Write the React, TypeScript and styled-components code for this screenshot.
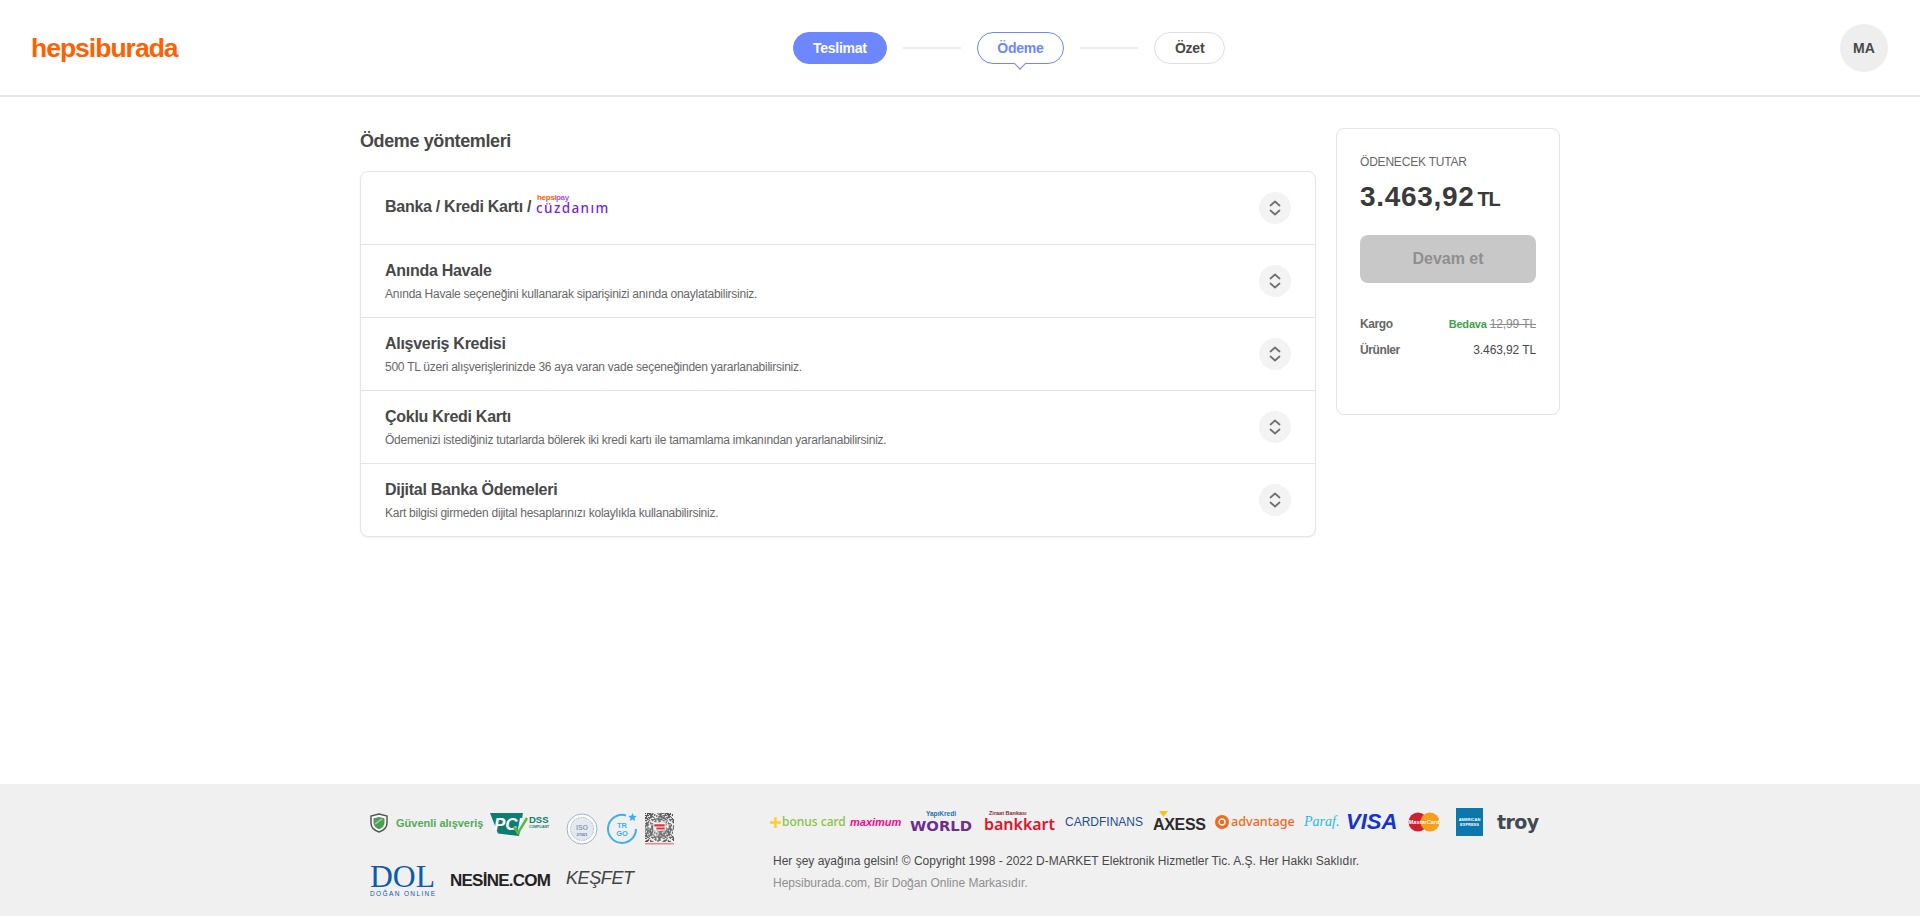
import React from 'react'
import styled, { createGlobalStyle } from 'styled-components'

const GlobalStyle = createGlobalStyle`
  html, body {
    margin: 0;
    padding: 0;
    background: #fff;
    font-family: "Liberation Sans", Arial, sans-serif;
    color: #484848;
  }
  * { box-sizing: border-box; }
`

const Page = styled.div`
  width: 1920px;
  height: 916px;
  display: flex;
  flex-direction: column;
  overflow: hidden;
`

const Header = styled.header`
  height: 97px;
  flex: none;
  display: grid;
  grid-template-columns: 762px auto 1fr;
  align-items: center;
  padding: 0 32px 0 31px;
  border-bottom: 2px solid #e5e5e5;
`

const Logo = styled.div`
  font-size: 26.5px;
  font-weight: 700;
  letter-spacing: -1px;
  line-height: 30px;
  color: #ff6000;
`

const Steps = styled.nav`
  display: flex;
  align-items: center;
  gap: 16px;
`

const Step = styled.div<{ $state: 'done' | 'active' | 'next' }>`
  position: relative;
  height: 32px;
  padding: 0 ${(p) => (p.$state === 'done' ? 19 : p.$state === 'active' ? 19.5 : 20)}px;
  display: flex;
  align-items: center;
  border-radius: 16px;
  font-size: 14px;
  font-weight: 700;
  letter-spacing: -0.25px;
  border: 1px solid
    ${(p) => (p.$state === 'next' ? '#dedede' : '#6c87ff')};
  background: ${(p) => (p.$state === 'done' ? '#6c87ff' : '#fff')};
  color: ${(p) =>
    p.$state === 'done' ? '#fff' : p.$state === 'active' ? '#6c87ff' : '#484848'};
`

const StepTail = styled.span`
  position: absolute;
  left: 50%;
  bottom: -5px;
  width: 8px;
  height: 8px;
  margin-left: -4px;
  background: #fff;
  border-right: 1px solid #6c87ff;
  border-bottom: 1px solid #6c87ff;
  transform: rotate(45deg);
`

const StepLine = styled.span`
  width: 58px;
  height: 2px;
  background: #eeeeee;
`

const Avatar = styled.div`
  justify-self: end;
  width: 48px;
  height: 48px;
  border-radius: 50%;
  background: #eeeeee;
  display: flex;
  align-items: center;
  justify-content: center;
  font-size: 14px;
  font-weight: 700;
  color: #484848;
`

const Main = styled.main`
  flex: 1;
  width: 1200px;
  margin: 0 auto;
  display: flex;
  gap: 20px;
  align-items: flex-start;
`

const Methods = styled.section`
  width: 956px;
`

const Title = styled.h2`
  margin: 33px 0 0;
  height: 41px;
  font-size: 18px;
  line-height: 22px;
  font-weight: 700;
  letter-spacing: -0.38px;
  color: #484848;
`

const Card = styled.div`
  border: 1px solid #e5e5e5;
  border-radius: 8px;
  box-shadow: 0 1px 2px rgba(0, 0, 0, 0.06);
  background: #fff;
`

const Row = styled.div`
  height: 73px;
  padding: 0 24px 0 24px;
  display: flex;
  align-items: center;
  justify-content: space-between;
  border-bottom: 1px solid #e5e5e5;
  &:last-child {
    height: 72px;
    border-bottom: none;
  }
`

const RowText = styled.div`
  display: flex;
  flex-direction: column;
  gap: 7px;
`

const RowTitle = styled.div`
  font-size: 16px;
  line-height: 18px;
  font-weight: 700;
  letter-spacing: -0.28px;
  color: #484848;
  display: flex;
  align-items: center;
`

const LeadTitle = styled(RowTitle)`
  margin-top: -2px;
`

const RowSub = styled.div`
  font-size: 12px;
  line-height: 14px;
  letter-spacing: -0.25px;
  color: #686868;
`

const Toggle = styled.div`
  width: 32px;
  height: 32px;
  border-radius: 50%;
  background: #f3f3f3;
  display: flex;
  align-items: center;
  justify-content: center;
`

const Summary = styled.aside`
  width: 224px;
  height: 287px;
  margin-top: 31px;
  padding: 26px 23px 0;
  border: 1px solid #e5e5e5;
  border-radius: 8px;
`

const SumLabel = styled.div`
  font-size: 12px;
  line-height: 14px;
  letter-spacing: -0.2px;
  color: #686868;
`

const Total = styled.div`
  margin-top: 12px;
  font-size: 28px;
  line-height: 32px;
  font-weight: 700;
  color: #3a3a3a;
  letter-spacing: 0.7px;
  small {
    font-size: 20px;
    letter-spacing: -1.2px;
    margin-left: 3px;
  }
`

const Continue = styled.button`
  display: block;
  width: 176px;
  height: 48px;
  margin-top: 20px;
  border: none;
  border-radius: 8px;
  background: #c8c8c8;
  color: #8f8f8f;
  font: 700 16px "Liberation Sans", Arial, sans-serif;
`

const SumRows = styled.div`
  margin-top: 34px;
  display: flex;
  flex-direction: column;
  gap: 12px;
`

const SumRow = styled.div`
  display: flex;
  justify-content: space-between;
  font-size: 12px;
  line-height: 14px;
  letter-spacing: -0.1px;
  color: #484848;
`

const SumKey = styled.span`
  color: #666;
  font-weight: 700;
  letter-spacing: -0.4px;
`

const Free = styled.span`
  color: #43a04a;
  font-weight: 700;
  font-size: 11px;
  letter-spacing: -0.2px;
  margin-right: 3px;
`

const Struck = styled.s`
  color: #8a8a8a;
`

const Footer = styled.footer`
  flex: none;
  height: 132px;
  background: #f0f0f0;
`

const FooterInner = styled.div`
  width: 1200px;
  height: 100%;
  margin: 0 auto;
  display: flex;
`

const FooterLeft = styled.div`
  width: 410px;
  padding: 29px 0 0 10px;
  display: flex;
  flex-direction: column;
  gap: 18px;
`

const FooterRight = styled.div`
  flex: 1;
  padding-top: 23px;
`

const BadgeRow = styled.div`
  display: flex;
  align-items: flex-start;
  height: 33px;
`

const LogoRow = styled.div`
  display: flex;
  align-items: center;
  height: 33px;
`

const BrandRow = styled.div`
  display: flex;
  align-items: center;
  height: 30px;
`

const Secure = styled.span`
  font-size: 11px;
  font-weight: 700;
  color: #55a85c;
  margin: 3px 9px 0 8px;
  line-height: 14px;
  width: 85px;
  white-space: nowrap;
`

const Drawn = styled.svg<{ $gap?: number; $top?: number }>`
  flex: none;
  display: block;
  overflow: visible;
  margin-right: ${(p) => p.$gap ?? 0}px;
  margin-top: ${(p) => p.$top ?? 0}px;
`

const Brand = styled.span<{ $w: number; $c: string; $size: number; $weight?: number; $font?: string; $spacing?: number; $italic?: boolean; $top?: number }>`
  flex: none;
  width: ${(p) => p.$w}px;
  color: ${(p) => p.$c};
  font-size: ${(p) => p.$size}px;
  font-weight: ${(p) => p.$weight ?? 400};
  font-family: ${(p) => p.$font ?? '"Liberation Sans", Arial, sans-serif'};
  letter-spacing: ${(p) => p.$spacing ?? 0}px;
  font-style: ${(p) => (p.$italic ? 'italic' : 'normal')};
  white-space: nowrap;
  line-height: 18px;
  margin-top: ${(p) => p.$top ?? 0}px;
`

const Legal = styled.p<{ $muted?: boolean }>`
  margin: ${(p) => (p.$muted ? '8px 0 0' : '17px 0 0')};
  padding-left: 3px;
  font-size: 12px;
  line-height: 14px;
  color: ${(p) => (p.$muted ? '#8f8f8f' : '#484848')};
`

const Chevrons = () => (
  <svg width="14" height="18" viewBox="0 0 14 18" fill="none" stroke="#707070" strokeWidth="1.7" strokeLinecap="round" strokeLinejoin="round">
    <path d="M2.5 6.5 7 2.5l4.5 4M2.5 11.5 7 15.5l4.5-4" />
  </svg>
)

const WalletLogo = () => (
  <Drawn width="73" height="28" viewBox="0 0 73 28">
    <text x="2" y="7" fontFamily="Liberation Sans" fontSize="8" fill="#ff6000" fontWeight="700">hepsi</text>
    <text x="21" y="7" fontFamily="Liberation Sans" fontSize="8" fill="#a855f7">pay</text>
    <text x="1" y="20" fontFamily="Noto Sans" fontSize="13.500" fontWeight="500" fill="#7a1fe0" textLength="72">cüzdanım</text>
  </Drawn>
)

const Shield = () => (
  <Drawn width="18" height="20" viewBox="0 0 18 20">
    <path d="M9 1 17 3v7c0 4.500-3.500 7.500-8 9-4.500-1.500-8-4.500-8-9V3z" fill="#fff" stroke="#555" strokeWidth="1.5" />
    <path d="M9 4 14.500 5.300v4.700c0 3-2.400 5-5.500 6.200C5.900 15 3.500 13 3.500 10V5.300z" fill="#4f9d55" />
    <path d="M5 11l7-5" stroke="#8fce94" strokeWidth="1.600" />
  </Drawn>
)

const Pci = () => (
  <Drawn width="60" height="24" viewBox="0 0 60 24" $gap={16}>
    <path d="M0 0h33l-4 23-21-2.500z" fill="#0f7c71" />
    <text x="4" y="17" fontFamily="Liberation Sans" fontWeight="700" fontStyle="italic" fontSize="17" fill="#fff">PCI</text>
    <path d="M24 14l4 6 9-15" fill="none" stroke="#5fb83c" strokeWidth="2.500" />
    <text x="39" y="10" fontFamily="Liberation Sans" fontWeight="700" fontSize="9.500" fill="#0f7c71">DSS</text>
    <text x="39" y="14.500" fontFamily="Liberation Sans" fontWeight="700" fontSize="3.400" fill="#0f7c71">COMPLIANT</text>
  </Drawn>
)

const Iso = () => (
  <Drawn width="32" height="32" viewBox="0 0 32 32" $gap={8}>
    <circle cx="16" cy="16" r="15" fill="#fff" stroke="#9db3c8" strokeWidth="1" />
    <circle cx="16" cy="16" r="11.500" fill="#e3e9ef" stroke="#a7b8c9" strokeWidth="1" strokeDasharray="1.500 1" />
    <text x="16" y="17" textAnchor="middle" fontFamily="Liberation Sans" fontWeight="700" fontSize="7" fill="#8ea3b8">ISO</text>
    <text x="16" y="23" textAnchor="middle" fontFamily="Liberation Sans" fontWeight="700" fontSize="4" fill="#5f7d9b">27001</text>
  </Drawn>
)

const TrGo = () => (
  <Drawn width="32" height="32" viewBox="0 0 32 32" $gap={7}>
    <path d="M20 2.500A14 14 0 1 0 30 16" fill="none" stroke="#3db0ea" strokeWidth="2" />
    <path d="M26.500 0l1.300 2.800 3 .3-2.300 2 .7 3-2.700-1.600-2.700 1.600.7-3-2.300-2 3-.3z" fill="#3db0ea" />
    <text x="16" y="15" textAnchor="middle" fontFamily="Liberation Sans" fontWeight="700" fontSize="7.500" fill="#3db0ea">TR</text>
    <text x="16" y="22.500" textAnchor="middle" fontFamily="Liberation Sans" fontWeight="700" fontSize="7.500" fill="#3db0ea">GO</text>
  </Drawn>
)

// qr cells are only texture at this size, so a fixed pseudo random pattern is enough
const qrCells: [number, number][] = []
for (let y = 0; y < 28; y++) {
  for (let x = 0; x < 28; x++) {
    if ((x * x * 7 + y * y * 13 + x * y * 5 + x * 3) % 17 < 9) qrCells.push([x, y])
  }
}

const Qr = () => (
  <Drawn width="29" height="32" viewBox="0 0 28 31">
    {qrCells.map(([x, y]) => (
      <rect key={`${x}-${y}`} x={x} y={y} width="1" height="1" fill="#3a3a3a" />
    ))}
    <rect x="8" y="9" width="12" height="8" fill="#f0f0f0" />
    <path d="M9 11h10v2H9zM11 14h8v2h-8z" fill="#d8383f" />
    <rect x="0" y="29" width="28" height="1.500" fill="#e58a8c" />
  </Drawn>
)

const DolLogo = () => (
  <Drawn width="66" height="33" viewBox="0 0 66 33" $gap={14}>
    <text x="0" y="23" fontFamily="Liberation Serif" fontSize="32" fill="#0d5cab" textLength="65" lengthAdjust="spacingAndGlyphs">DOL</text>
    <text x="0" y="32" fontFamily="Liberation Sans" fontSize="6.500" fill="#0d5cab" textLength="65">DOĞAN ONLINE</text>
  </Drawn>
)

const Plus = () => (
  <Drawn width="11" height="11" viewBox="0 0 11 11" $gap={1}>
    <path d="M4.300 0h2.400v4.300H11v2.400H6.700V11H4.300V6.700H0V4.300h4.300z" fill="#ffcf26" />
  </Drawn>
)

const WorldLogo = () => (
  <Drawn width="62" height="24" viewBox="0 0 62 24" $gap={12}>
    <text x="16" y="6" fontFamily="Liberation Sans" fontWeight="700" fontSize="6.500" fill="#1d6fb8">YapıKredi</text>
    <text x="0" y="21" fontFamily="DejaVu Sans" fontWeight="700" fontSize="14" fill="#6f2c91" textLength="62" lengthAdjust="spacingAndGlyphs">WORLD</text>
  </Drawn>
)

const BankkartLogo = () => (
  <Drawn width="72" height="26" viewBox="0 0 72 26" $gap={9}>
    <text x="5" y="6" fontFamily="Liberation Sans" fontWeight="700" fontSize="5.500" fill="#8a2b30">Ziraat Bankası</text>
    <text x="0" y="21" fontFamily="Noto Sans" fontWeight="600" fontSize="16" fill="#e2142d" textLength="71">bankkart</text>
  </Drawn>
)

const AxessLogo = () => (
  <Drawn width="54" height="22" viewBox="0 0 54 22" $gap={8} $top={-2}>
    <path d="M6 1h9l-4.500 6z" fill="#f8c21c" />
    <text x="0" y="20" fontFamily="Liberation Sans" fontWeight="700" fontSize="16" fill="#2b2b2b" textLength="53">AXESS</text>
  </Drawn>
)

const AdvantageMark = () => (
  <Drawn width="14" height="14" viewBox="0 0 14 14" $gap={2}>
    <circle cx="7" cy="7" r="7" fill="#f26a21" />
    <circle cx="7" cy="7" r="3" fill="none" stroke="#fff" strokeWidth="1.300" />
  </Drawn>
)

const MasterCard = () => (
  <Drawn width="32" height="20" viewBox="0 0 32 20" $gap={16}>
    <circle cx="10" cy="10" r="9.500" fill="#cf2030" />
    <circle cx="22" cy="10" r="9.500" fill="#f79e1b" />
    <text x="16" y="12" textAnchor="middle" fontFamily="Liberation Sans" fontWeight="700" fontStyle="italic" fontSize="5.600" fill="#fff">MasterCard</text>
  </Drawn>
)

const Amex = () => (
  <Drawn width="27" height="28" viewBox="0 0 27 28" $gap={14}>
    <rect width="27" height="28" fill="#0b77ad" />
    <text x="13.500" y="13" textAnchor="middle" fontFamily="Liberation Sans" fontWeight="700" fontSize="4" fill="#fff">AMERICAN</text>
    <text x="13.500" y="18" textAnchor="middle" fontFamily="Liberation Sans" fontWeight="700" fontSize="4" fill="#fff">EXPRESS</text>
  </Drawn>
)

const methods = [
  { title: 'Anında Havale', sub: 'Anında Havale seçeneğini kullanarak siparişinizi anında onaylatabilirsiniz.' },
  { title: 'Alışveriş Kredisi', sub: '500 TL üzeri alışverişlerinizde 36 aya varan vade seçeneğinden yararlanabilirsiniz.' },
  { title: 'Çoklu Kredi Kartı', sub: 'Ödemenizi istediğiniz tutarlarda bölerek iki kredi kartı ile tamamlama imkanından yararlanabilirsiniz.' },
  { title: 'Dijital Banka Ödemeleri', sub: 'Kart bilgisi girmeden dijital hesaplarınızı kolaylıkla kullanabilirsiniz.' },
]

const App = () => (
  <Page>
    <GlobalStyle />
    <Header>
      <Logo>hepsiburada</Logo>
      <Steps>
        <Step $state="done">Teslimat</Step>
        <StepLine />
        <Step $state="active">
          Ödeme
          <StepTail />
        </Step>
        <StepLine />
        <Step $state="next">Özet</Step>
      </Steps>
      <Avatar>MA</Avatar>
    </Header>

    <Main>
      <Methods>
        <Title>Ödeme yöntemleri</Title>
        <Card>
          <Row>
            <LeadTitle>
              Banka / Kredi Kartı /&nbsp;
              <WalletLogo />
            </LeadTitle>
            <Toggle><Chevrons /></Toggle>
          </Row>
          {methods.map((m) => (
            <Row key={m.title}>
              <RowText>
                <RowTitle>{m.title}</RowTitle>
                <RowSub>{m.sub}</RowSub>
              </RowText>
              <Toggle><Chevrons /></Toggle>
            </Row>
          ))}
        </Card>
      </Methods>

      <Summary>
        <SumLabel>ÖDENECEK TUTAR</SumLabel>
        <Total>3.463,92<small>TL</small></Total>
        <Continue>Devam et</Continue>
        <SumRows>
          <SumRow>
            <SumKey>Kargo</SumKey>
            <span><Free>Bedava</Free><Struck>12,99 TL</Struck></span>
          </SumRow>
          <SumRow>
            <SumKey>Ürünler</SumKey>
            <span>3.463,92 TL</span>
          </SumRow>
        </SumRows>
      </Summary>
    </Main>

    <Footer>
      <FooterInner>
        <FooterLeft>
          <BadgeRow>
            <Shield />
            <Secure>Güvenli alışveriş</Secure>
            <Pci />
            <Iso />
            <TrGo />
            <Qr />
          </BadgeRow>
          <LogoRow>
            <DolLogo />
            <Brand $w={116} $c="#232323" $size={17} $weight={700} $spacing={-0.75}>NESİNE.COM</Brand>
            <Brand $w={70} $c="#444" $size={18} $italic $spacing={-0.4} $top={-6}>KEŞFET</Brand>
          </LogoRow>
        </FooterLeft>
        <FooterRight>
          <BrandRow>
            <Plus />
            <Brand $w={68} $c="#86c440" $size={12} $font='"Noto Sans", sans-serif' $weight={500}>bonus card</Brand>
            <Brand $w={60} $c="#ec0d8c" $size={11} $weight={700} $italic>maximum</Brand>
            <WorldLogo />
            <BankkartLogo />
            <Brand $w={88} $c="#1d4f8c" $size={12}>CARDFINANS</Brand>
            <AxessLogo />
            <AdvantageMark />
            <Brand $w={73} $c="#f26a21" $size={12.6} $font='"Noto Sans", sans-serif' $weight={500}>advantage</Brand>
            <Brand $w={42} $c="#2cb7e6" $size={14} $font='"Liberation Serif", serif' $italic>Paraf.</Brand>
            <Brand $w={62} $c="#1434cb" $size={22} $weight={700} $italic>VISA</Brand>
            <MasterCard />
            <Amex />
            <Brand $w={43} $c="#3f4a52" $size={19} $weight={700} $font='"DejaVu Sans", sans-serif' $spacing={-0.6}>troy</Brand>
          </BrandRow>
          <Legal>Her şey ayağına gelsin! © Copyright 1998 - 2022 D-MARKET Elektronik Hizmetler Tic. A.Ş. Her Hakkı Saklıdır.</Legal>
          <Legal $muted>Hepsiburada.com, Bir Doğan Online Markasıdır.</Legal>
        </FooterRight>
      </FooterInner>
    </Footer>
  </Page>
)

export default App
